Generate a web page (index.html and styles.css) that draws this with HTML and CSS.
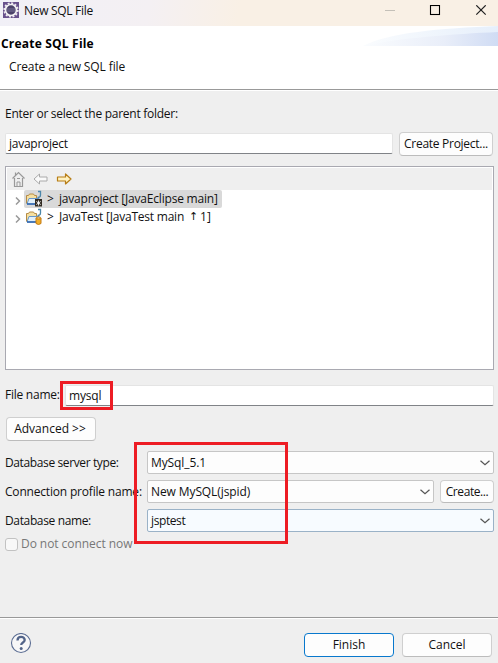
FILE: index.html
```html
<!DOCTYPE html>
<html lang="en">
<head>
<meta charset="utf-8">
<title>New SQL File</title>
<link rel="stylesheet" href="styles.css">
</head>
<body>
<div class="dialog">
  <div class="titlebar">
    <svg class="app" width="16" height="16" viewBox="0 0 16 16"><rect width="16" height="16" fill="#68518c"/><circle cx="8" cy="8" r="6.8" fill="none" stroke="#eeeaf0" stroke-width="1.800" stroke-dasharray="2 1.560"/><circle cx="8" cy="8" r="5.500" fill="#4a4168" stroke="#f4f2f4" stroke-width="1.700"/><path d="M4 7h8M4 9h8" stroke="#8c86ad" stroke-width=".7"/></svg>
    <span class="title">New SQL File</span>
    <svg class="controls" width="102" height="12" viewBox="0 0 102 12" fill="none"><path d="M0 5.500h10" stroke="#c4c0b8"/><rect x="45.500" y=".5" width="9" height="9" stroke="#000" stroke-width="1.100"/><path d="M91.300.3l9.400 9.400m0-9.400L91.300 9.700" stroke="#222" stroke-width="1.200"/></svg>
  </div>
  <header class="banner">
    <div class="heading">Create SQL File</div>
    <div class="subtitle">Create a new SQL file</div>
    <svg class="wave" width="135" height="20" viewBox="0 0 135 20"><defs><linearGradient id="wg"><stop offset="0" stop-color="#fafcfe"/><stop offset=".6" stop-color="#e9eef9"/><stop offset="1" stop-color="#d0dcf4"/></linearGradient><linearGradient id="wh"><stop offset="0" stop-color="#fafcfe"/><stop offset="1" stop-color="#e6effb"/></linearGradient></defs><path d="M0 20C24 7 77 2 135 0V20z" fill="url(#wh)"/><path d="M0 20C35 12 91 8 135 6V20z" fill="url(#wg)"/></svg>
  </header>
  <main class="content">
    <div class="parent-label"><span class="t-parent">Enter or select the parent folder:</span></div>
    <div class="folder-row"><div class="input folder"><span class="t-folder">javaproject</span></div><div class="button project"><span class="t-project">Create Project...</span></div></div>
    <div class="tree">
      <div class="toolbar">
        <svg width="62" height="18" viewBox="0 0 62 18" fill="none"><path d="M.5 8.500L6.500 2.500l6 6M2.500 8v8.500h8V8M3.500 5V2.500" stroke="#999" stroke-width="1.200"/><path d="M5 16v-4h3v4M5 8.500h3" stroke="#999"/><path d="M22 9l5.500-5v3h7.500v4h-7.500v3z" fill="#fafafa" stroke="#aaa" stroke-linejoin="round"/><path d="M59 9l-5.500-5v3h-8v4h8v3z" fill="#fff1bf" stroke="#b77d15" stroke-width="1.200" stroke-linejoin="round"/></svg>
      </div>
      <div class="node"><svg class="chevron" width="6" height="8" viewBox="0 0 6 8"><path d="M1 .5L4.500 4 1 7.500"/></svg><div class="item selected">
        <svg width="18" height="18" viewBox="0 0 18 18" fill="none"><path d="M.5 13.500v-8h2l1-1.500h4l1 1.500h2v4" fill="#f5dfa0" stroke="#b58b45"/><path d="M3 8.500h10l-2 5.500H1z" fill="#e1f0fb" stroke="#6696c8"/><path d="M1 14h9" stroke="#2860ad" stroke-width="1.500"/><path d="M12 1.500h2.500V5q0 2.500-3 2.500" stroke="#4d87aa" stroke-width="1.300"/><path d="M9 9h7v7.500H9z" fill="#302a22"/><path d="M12.500 10.500v5m-2.200-4l4.400 3m0-3l-4.400 3" stroke="#fff" stroke-width=".9"/></svg><span class="gt">&gt;</span><span class="t-node1">javaproject [JavaEclipse main]</span></div></div>
      <div class="node"><svg class="chevron" width="6" height="8" viewBox="0 0 6 8"><path d="M1 .5L4.500 4 1 7.500"/></svg><div class="item">
        <svg width="18" height="18" viewBox="0 0 18 18" fill="none"><path d="M.5 13.500v-8h2l1-1.500h4l1 1.500h2v4" fill="#f5dfa0" stroke="#b58b45"/><path d="M3 8.500h10l-2 5.500H1z" fill="#e1f0fb" stroke="#6696c8"/><path d="M1 14h9" stroke="#2860ad" stroke-width="1.500"/><path d="M12 1.500h2.500V5q0 2.500-3 2.500" stroke="#4d87aa" stroke-width="1.300"/><path d="M10 10v5.500q2.500 2 5 0V10" fill="#f1ae2a" stroke="#c47b12"/><ellipse cx="12.500" cy="10" rx="2.500" ry="1" fill="#ffe28a" stroke="#c47b12"/></svg><span class="gt">&gt;</span><span class="t-node2">JavaTest [JavaTest main</span><span class="up">↑</span><span>1]</span></div></div>
    </div>
    <div class="file-row"><label><span class="t-file">File name:</span></label><div class="input file"><span class="t-mysql">mysql</span></div><div class="mark mark-file"></div></div>
    <div class="button advanced"><span class="t-advanced">Advanced &gt;&gt;</span></div>
    <div class="profile">
      <label><span class="t-server">Database server type:</span></label>
      <div class="combo wide"><span class="t-type">MySql_5.1</span><svg class="down" width="10" height="6" viewBox="0 0 10 6"><path d="M.5 .8l4.500 4 4.500-4"/></svg></div>
      <label><span class="t-conn">Connection profile name:</span></label>
      <div class="combo"><span class="t-prof">New MySQL(jspid)</span><svg class="down" width="10" height="6" viewBox="0 0 10 6"><path d="M.5 .8l4.500 4 4.500-4"/></svg></div>
      <div class="button create"><span class="t-create">Create...</span></div>
      <label><span class="t-db">Database name:</span></label>
      <div class="combo wide active"><span class="t-jsp">jsptest</span><svg class="down" width="10" height="6" viewBox="0 0 10 6"><path d="M.5 .8l4.500 4 4.500-4"/></svg></div>
      <div class="mark mark-db"></div>
    </div>
    <div class="check-row"><span class="box"></span><span class="t-check">Do not connect now</span></div>
  </main>
  <footer class="footer">
    <svg class="help" width="22" height="22" viewBox="0 0 22 22"><circle cx="11" cy="10" r="9.500" fill="#f7f7f8" stroke="#5a6c92" stroke-width="1.100"/><path d="M7.500 7.500C7.500 2.500 14.700 3 14.700 7c0 2.500-3.500 2.500-3.500 5" fill="none" stroke="#526489" stroke-width="2.300"/><circle cx="11.200" cy="15.500" r="1.500" fill="#526489"/></svg>
    <div class="button finish"><span class="t-finish">Finish</span></div><div class="button cancel"><span class="t-cancel">Cancel</span></div>
  </footer>
</div>
</body>
</html>
```
FILE: styles.css
```css
* { box-sizing: border-box; }
body { margin: 0; font: 12px/18px "Open Sans", "Noto Sans", sans-serif; color: #111; }
.dialog { width: 498px; height: 663px; background: #efefef; display: flex; flex-direction: column; overflow: hidden; white-space: nowrap; }
svg { flex: none; }
.titlebar { height: 26px; flex: none; display: flex; align-items: flex-start; background: linear-gradient(100deg, #f1f0f7 0, #f4f0f3 30%, #f9f0e5 48%, #f9f0e5 100%); }
.app { margin: 2px 5px 0 3px; }
.title { margin-top: 2px; letter-spacing: -.3px; }
.controls { margin: 5px 11px 0 auto; }
.banner { height: 65px; flex: none; position: relative; background: #fff; border-bottom: 1px solid #fff; box-shadow: inset 0 -1px #999; padding: 9px 0 0 1px; }
.heading { font-weight: 700; color: #000; letter-spacing: .2px; }
.subtitle { padding: 5px 0 0 8px; letter-spacing: -.11px; }
.wave { position: absolute; right: 0; top: 0; }
.content { height: 526px; flex: none; padding: 14px 4px 0 5px; display: flex; flex-direction: column; }
.parent-label { height: 27px; }
.folder-row { display: flex; height: 24px; align-items: flex-start; }
.input { background: #fff; border: 1px solid #e4e4e4; border-bottom-color: #808387; border-radius: 2px; height: 21px; padding-left: 3px; line-height: 20px; }
.folder { width: 388px; margin: 1px 6px 0 0; }
.button { height: 24px; border: 1px solid #cfcfcf; border-bottom-color: #bcbcbc; border-radius: 4px; background: #fdfdfd; text-align: center; line-height: 21px; }
.project { width: 94px; }
.tree { height: 204px; margin-top: 10px; border: 1px solid #a9a9b1; background: #fff; padding: 1px; }
.toolbar { height: 22px; background: #efefef; padding: 2px 0 0 5px; }
.toolbar svg { display: block; }
.node { height: 18px; display: flex; align-items: center; padding-left: 8px; }
.chevron { margin: 3px 3px 0 0; fill: none; stroke: #999; stroke-width: 1.5; }
.item { height: 18px; display: flex; padding: 0 4px 0 2px; line-height: 17px; }
.item svg { margin-right: 3px; }
.gt { width: 12px; }
.selected { background: #d9d9d9; border-radius: 2px; }
.up { font-family: "DejaVu Sans", sans-serif; font-size: 11px; width: 11px; margin-left: 5px; }
.file-row { position: relative; display: flex; margin-top: 15px; height: 21px; }
.file-row label { width: 60px; line-height: 20px; }
.file { flex: 1; }
.mark { position: absolute; border: 3px solid #ed1c24; }
.mark-file { left: 55px; top: -4px; width: 53px; height: 29px; }
.advanced { width: 90px; margin: 11px 0 10px 1px; padding-right: 2px; }
.profile { position: relative; display: grid; grid-template-columns: 142px 287px 6px 54px; grid-template-rows: repeat(3, 23px); row-gap: 6px; }
.profile label { line-height: 23px; grid-column: 1; }
.combo { grid-column: 2; border: 1px solid #c6c6c6; border-radius: 2px; background: #fdfdfd; padding: 0 3px; display: flex; align-items: center; justify-content: space-between; }
.wide { grid-column: 2 / 5; }
.active { background: #f7fbff; border-color: #9ab2c7; }
.down { fill: none; stroke: #555; stroke-width: 1.2; }
.create { grid-column: 4; height: 23px; }
.mark-db { left: 129px; top: -9px; width: 154px; height: 102px; }
.check-row { display: flex; align-items: center; height: 18px; margin-top: 3px; color: #777; }
.box { width: 13px; height: 13px; border: 1px solid #c2c2c2; border-radius: 3px; background: #f8f8f8; margin-right: 3px; }
.footer { flex: 1; border-top: 1px solid #999; box-shadow: inset 0 1px #fff; padding: 15px 6px 0 10px; display: flex; }
.finish { width: 90px; margin-left: auto; border-color: #0878cd; }
.cancel { width: 90px; margin-left: 8px; }
.t-parent { letter-spacing: -.27px; }
.t-folder { letter-spacing: -.25px; }
.t-project { letter-spacing: -.28px; }
.t-node1 { letter-spacing: -.2px; }
.t-node2 { letter-spacing: -.22px; }
.t-file { letter-spacing: -.25px; }
.t-mysql { letter-spacing: -.2px; }
.t-server { letter-spacing: -.38px; }
.t-conn { letter-spacing: -.19px; }
.t-db { letter-spacing: -.36px; }
.t-type, .t-prof { letter-spacing: -.1px; }
.t-jsp, .t-create { letter-spacing: -.4px; }
.t-check { letter-spacing: -.06px; }
```
